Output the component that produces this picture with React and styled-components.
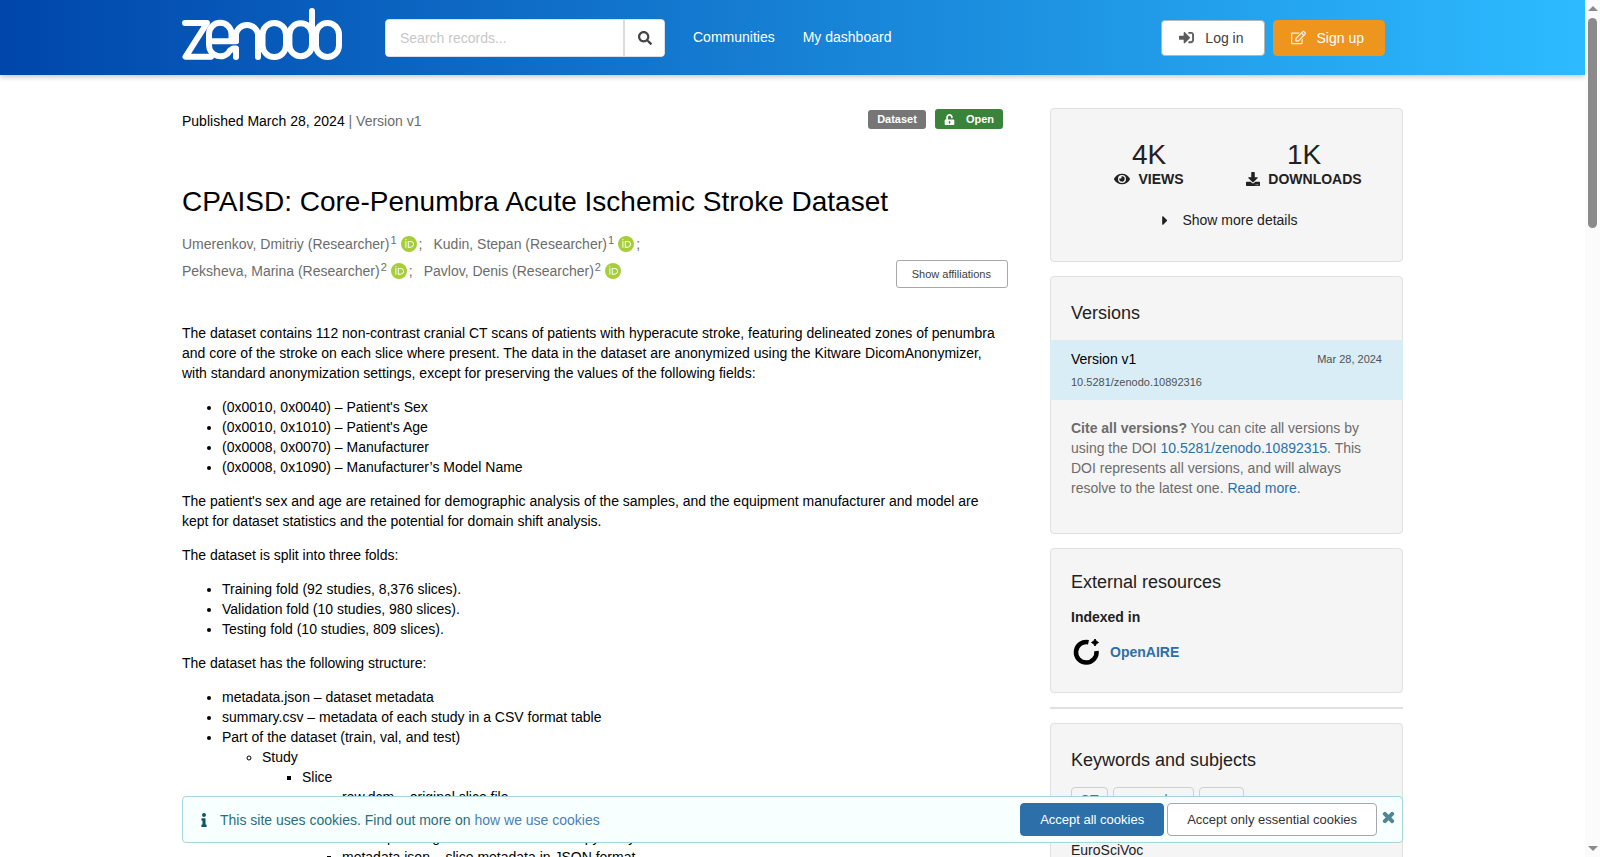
import { useState } from "react";
import styled, { createGlobalStyle } from "styled-components";
import { FaSearch, FaEye, FaDownload, FaCaretRight, FaUnlockAlt, FaInfo, FaTimes, FaSignInAlt, FaRegEdit } from "react-icons/fa";

const colors = {
    text: "#000000",
    heading: "#212121",
    muted: "#6c6c6c",
    link: "#2d6fa8",
    border: "#e0e0e0",
    panel: "#f5f5f5",
    orcid: "#a6ce39",
};

const GlobalStyle = createGlobalStyle`
    * {
        box-sizing: border-box;
    }

    body {
        margin: 0;
        background: #ffffff;
        color: ${colors.text};
        font-family: "Liberation Sans", Arial, sans-serif;
        font-size: 14px;
        line-height: 20px;
    }

    button, input {
        font-family: inherit;
    }

    a {
        color: ${colors.link};
        text-decoration: none;
    }
`;

const Window = styled.div`
    display: flex;
    height: 100vh;
    overflow: hidden;
`;

const Page = styled.div`
    flex: 1;
    min-width: 0;
    height: 100%;
    overflow: hidden;
    position: relative;
`;

const Container = styled.div`
    width: 100%;
    max-width: 1221px;
    margin: 0 auto;
`;

const Header = styled.header`
    height: 75px;
    background: linear-gradient(90deg, #0046ab, #2dbbff);
    box-shadow: 0 2px 5px rgba(0, 0, 0, 0.22);
`;

const HeaderContent = styled(Container)`
    display: flex;
    align-items: center;
    height: 75px;
    padding-right: 18px;
`;

const LogoLink = styled.a`
    display: flex;
    margin: 0 43px 7px 0;
`;

const SearchForm = styled.form`
    display: flex;
    width: 280px;
    height: 38px;
    background: #ffffff;
    border: 1px solid #dcdfe3;
    border-radius: 4px;
    overflow: hidden;
`;

const SearchInput = styled.input`
    flex: 1;
    min-width: 0;
    padding: 0 14px;
    border: none;
    font-size: 14px;
    outline: none;

    &::placeholder {
        color: #c8c8c8;
    }
`;

const SearchButton = styled.button`
    display: flex;
    align-items: center;
    justify-content: center;
    width: 41px;
    padding: 0;
    border: none;
    border-left: 2px solid #dcdcdc;
    background: #ffffff;
    color: #444444;
    font-size: 14px;
    cursor: pointer;
`;

const Nav = styled.nav`
    display: flex;
    flex: 1;
    gap: 28px;
    margin-left: 28px;
    padding-bottom: 2px;

    & a {
        color: #ffffff;
    }
`;

const Actions = styled.div`
    display: flex;
    gap: 8px;
`;

const HeaderButton = styled.button`
    display: flex;
    align-items: center;
    gap: 11px;
    height: 36px;
    padding: 0 20px 0 17px;
    border: 1px solid ${(props) => (props.$primary ? "#ed951c" : "#b5b5b5")};
    border-radius: 4px;
    background: ${(props) => (props.$primary ? "#ed951c" : "#ffffff")};
    color: ${(props) => (props.$primary ? "#ffffff" : "#404040")};
    font-size: 14px;
    cursor: pointer;

    & svg {
        width: 15px;
        height: 15px;
        opacity: 0.85;
    }
`;

const Layout = styled(Container)`
    display: flex;
    gap: 42px;
    padding-top: 33px;
`;

const Main = styled.main`
    flex: 1;
    min-width: 0;
`;

const Sidebar = styled.aside`
    flex: 0 0 353px;
`;

const InfoRow = styled.div`
    display: flex;
    justify-content: space-between;
    padding: 0 5px 0 0;
`;

const Published = styled.div`
    padding-top: 3px;

    & span {
        color: ${colors.muted};
    }
`;

const Labels = styled.div`
    display: flex;
    align-items: center;
    gap: 9px;
    height: 22px;
`;

const Label = styled.span`
    display: flex;
    align-items: center;
    gap: 11px;
    height: ${(props) => (props.$open ? "20px" : "19px")};
    padding: 0 9px;
    border-radius: 3px;
    background: ${(props) => (props.$open ? "#3a833b" : "#767676")};
    color: #ffffff;
    font-size: 11px;
    font-weight: bold;
`;

const Title = styled.h1`
    margin: 53px 0 0;
    font-size: 28px;
    font-weight: normal;
    line-height: 36px;
`;

const CreatorsRow = styled.div`
    display: flex;
    justify-content: space-between;
    align-items: flex-end;
    margin-top: 10px;
`;

const Creators = styled.ul`
    display: flex;
    flex-wrap: wrap;
    flex: 0 1 580px;
    margin: 0 0 5px;
    padding: 0;
    list-style: none;
`;

const Creator = styled.li`
    display: flex;
    align-items: center;
    height: 27px;
    margin-right: 11px;
    color: ${colors.muted};

    & a {
        color: ${colors.muted};
    }

    & sup {
        align-self: flex-start;
        margin: 0 4px 0 1px;
        font-size: 11px;
        line-height: 20px;
    }

    & svg {
        margin-right: 2px;
    }
`;

const AffiliationsButton = styled.button`
    height: 28px;
    margin-bottom: 1px;
    padding: 0 16px 0 15px;
    border: 1px solid #a8a8a8;
    border-radius: 3px;
    background: #ffffff;
    color: #404040;
    font-size: 11px;
    cursor: pointer;
`;

const Description = styled.section`
    margin-top: 34px;

    & p {
        margin: 0 0 14px;
    }

    & ul {
        margin: 0 0 14px;
        padding-left: 40px;
    }

    & ul ul {
        margin: 0;
    }
`;

const Panel = styled.section`
    margin-bottom: 14px;
    padding: ${(props) => props.$padding || "23px 20px"};
    border: 1px solid ${colors.border};
    border-radius: 4px;
    background: ${colors.panel};
    color: ${colors.heading};
`;

const PanelTitle = styled.h2`
    margin: 0;
    font-size: 18px;
    font-weight: normal;
    line-height: 24px;
`;

const Stats = styled.div`
    display: grid;
    grid-template-columns: 155px 155px;
    justify-content: center;
    text-align: center;
`;

const StatValue = styled.div`
    font-size: 28px;
    line-height: 28px;
`;

const StatLabel = styled.div`
    display: flex;
    align-items: center;
    justify-content: center;
    gap: 8px;
    font-weight: bold;
    white-space: nowrap;
`;

const DetailsButton = styled.button`
    display: flex;
    align-items: center;
    gap: 14px;
    margin: 21px auto 0;
    padding: 0 0 0 7px;
    border: none;
    background: none;
    color: ${colors.heading};
    font-size: 14px;
    line-height: 20px;
    cursor: pointer;

    & svg {
        width: 6px;
        height: 15px;
    }
`;

const VersionRow = styled.div`
    display: grid;
    grid-template-columns: 1fr auto;
    row-gap: 3px;
    margin: 15px -21px 18px;
    padding: 9px 21px 8px;
    background: #d9edf6;
    color: ${colors.text};

    & a, & time {
        color: #4f5254;
        font-size: 11px;
    }
`;

const Note = styled.p`
    margin: 0;
    color: ${colors.muted};
`;

const IndexedTitle = styled.h3`
    margin: 13px 0 10px;
    font-size: 14px;
    line-height: 20px;
`;

const IndexedLink = styled.a`
    display: flex;
    align-items: center;
    gap: 9px;
    font-weight: bold;
`;

const Divider = styled.hr`
    height: 2px;
    margin: 0 0 14px;
    border: none;
    background: ${colors.border};
`;

const Tags = styled.div`
    display: flex;
    gap: 5px;
    margin: 15px 0 27px;
`;

const Tag = styled.a`
    padding: 2px 8px;
    border: 1px solid #cfcfcf;
    border-radius: 4px;
    color: #6c6c6c;
`;

const CookieBar = styled.div`
    position: absolute;
    bottom: 14px;
    left: 0;
    right: 0;
`;

const CookieContent = styled(Container)`
    display: flex;
    align-items: center;
    height: 47px;
    padding: 0 6px 0 14px;
    border: 1px solid #a3d6df;
    border-radius: 4px;
    background: #f8ffff;
    color: #276f80;

    & > svg {
        flex: none;
        margin-right: 9px;
        color: #0e566c;
    }
`;

const CookieText = styled.p`
    flex: 1;
    margin: 0;

    & a {
        color: #4a80b8;
    }
`;

const CookieButton = styled.button`
    height: 33px;
    margin-right: 3px;
    padding: 0 19px;
    border: 1px solid ${(props) => (props.$primary ? "#2d6fa8" : "#a8a8a8")};
    border-radius: 4px;
    background: ${(props) => (props.$primary ? "#2d6fa8" : "#ffffff")};
    color: ${(props) => (props.$primary ? "#ffffff" : "#333333")};
    font-size: 13px;
    cursor: pointer;
`;

const CloseButton = styled.button`
    display: flex;
    margin: 0 0 5px 1px;
    padding: 0;
    border: none;
    background: none;
    color: #4f8794;
    cursor: pointer;

    & path {
        stroke: currentColor;
        stroke-width: 40px;
    }
`;

const Scrollbar = styled.div`
    display: flex;
    flex-direction: column;
    align-items: center;
    justify-content: space-between;
    flex: 0 0 15px;
    padding: 6px 0;
    background: #fbfbfb;
`;

const ScrollArea = styled.div`
    flex: 1;
    padding-top: 7px;
`;

const ScrollThumb = styled.div`
    width: 9px;
    height: 210px;
    border-radius: 5px;
    background: #8b8b8b;
`;

const ScrollArrow = styled.div`
    border: 5px solid transparent;
    border-top: ${(props) => (props.$up ? "none" : "5px solid #8b8b8b")};
    border-bottom: ${(props) => (props.$up ? "5px solid #8b8b8b" : "none")};
`;

const creators = [
    { name: "Umerenkov, Dmitriy (Researcher)", affiliation: 1 },
    { name: "Kudin, Stepan (Researcher)", affiliation: 1 },
    { name: "Peksheva, Marina (Researcher)", affiliation: 2 },
    { name: "Pavlov, Denis (Researcher)", affiliation: 2 },
];

const keywords = ["CT", "penumbra", "core"];

function Logo(){
    return(
        <svg width="160" height="52" viewBox="0 0 160 52" fill="none" stroke="#ffffff" strokeWidth="6" strokeLinecap="round" strokeLinejoin="round" aria-label="Zenodo" role="img">
            <path d="M3 15H25L3.500 48.800H29" />
            <path d="M27 33.200H54M49.500 33V26A11.200 11.200 0 0 0 27 26V37A11.200 11.200 0 0 0 48 42.500L51 40.500H54V49" />
            <path d="M54 33V26A11.200 11.200 0 0 1 76 26V49" />
            <rect x="80.500" y="15" width="23.500" height="34" rx="11.700" />
            <path d="M130 3V37A11.300 11.300 0 0 1 107.400 37V26.500A11.300 11.300 0 0 1 130 26.500" />
            <rect x="134" y="15" width="23" height="34" rx="11.500" />
        </svg>
    )
}

function OrcidIcon(){
    return(
        <svg width="16" height="16" viewBox="0 0 256 256" role="img" aria-label="ORCID">
            <circle cx="128" cy="128" r="128" fill={colors.orcid} />
            <path fill="#ffffff" d="M71 79h15v107H71zM109 79h42c40 0 57 28 57 54 0 28-22 54-57 54h-42zm15 14v80h25c35 0 43-27 43-40 0-22-14-40-45-40z" />
            <circle cx="78" cy="57" r="10" fill="#ffffff" />
        </svg>
    )
}

function OpenAireIcon(){
    return(
        <svg width="30" height="30" viewBox="0 0 30 30" aria-hidden="true">
            <path d="M17.500 5.200A10.300 10.300 0 1 0 25.500 14" fill="none" stroke="#000000" strokeWidth="4.500" />
            <path d="M24 2Q24.800 4.700 27.500 5.500Q24.800 6.300 24 9Q23.200 6.300 20.500 5.500Q23.200 4.700 24 2Z" fill="#000000" stroke="#000000" strokeWidth="1" />
        </svg>
    )
}

function App(){
    const [showCookies, setShowCookies] = useState(true);

    return(
        <Window>
            <GlobalStyle />

            <Page>
                <Header>
                    <HeaderContent>
                        <LogoLink href="#home"><Logo /></LogoLink>
                        <SearchForm onSubmit={(e) => e.preventDefault()}>
                            <SearchInput type="text" aria-label="Search records" placeholder="Search records..." />
                            <SearchButton type="submit" aria-label="Search"><FaSearch /></SearchButton>
                        </SearchForm>
                        <Nav>
                            <a href="#communities">Communities</a>
                            <a href="#dashboard">My dashboard</a>
                        </Nav>
                        <Actions>
                            <HeaderButton><FaSignInAlt />Log in</HeaderButton>
                            <HeaderButton $primary><FaRegEdit />Sign up</HeaderButton>
                        </Actions>
                    </HeaderContent>
                </Header>

                <Layout>
                    <Main>
                        <InfoRow>
                            <Published>Published March 28, 2024 <span>| Version v1</span></Published>
                            <Labels>
                                <Label>Dataset</Label>
                                <Label $open><FaUnlockAlt />Open</Label>
                            </Labels>
                        </InfoRow>

                        <Title>CPAISD: Core-Penumbra Acute Ischemic Stroke Dataset</Title>

                        <CreatorsRow>
                            <Creators>
                                {creators.map((creator, index) => (
                                    <Creator key={creator.name}>
                                        <a href="#creator">{creator.name}</a>
                                        <sup>{creator.affiliation}</sup>
                                        <OrcidIcon />
                                        {index < creators.length - 1 ? ";" : null}
                                    </Creator>
                                ))}
                            </Creators>
                            <AffiliationsButton>Show affiliations</AffiliationsButton>
                        </CreatorsRow>

                        <Description>
                            <p>The dataset contains 112 non-contrast cranial CT scans of patients with hyperacute stroke, featuring delineated zones of penumbra and core of the stroke on each slice where present. The data in the dataset are anonymized using the Kitware DicomAnonymizer, with standard anonymization settings, except for preserving the values of the following fields:</p>
                            <ul>
                                <li>(0x0010, 0x0040) – Patient's Sex</li>
                                <li>(0x0010, 0x1010) – Patient's Age</li>
                                <li>(0x0008, 0x0070) – Manufacturer</li>
                                <li>(0x0008, 0x1090) – Manufacturer’s Model Name</li>
                            </ul>
                            <p>The patient's sex and age are retained for demographic analysis of the samples, and the equipment manufacturer and model are kept for dataset statistics and the potential for domain shift analysis.</p>
                            <p>The dataset is split into three folds:</p>
                            <ul>
                                <li>Training fold (92 studies, 8,376 slices).</li>
                                <li>Validation fold (10 studies, 980 slices).</li>
                                <li>Testing fold (10 studies, 809 slices).</li>
                            </ul>
                            <p>The dataset has the following structure:</p>
                            <ul>
                                <li>metadata.json – dataset metadata</li>
                                <li>summary.csv – metadata of each study in a CSV format table</li>
                                <li>Part of the dataset (train, val, and test)
                                    <ul>
                                        <li>Study
                                            <ul>
                                                <li>Slice
                                                    <ul>
                                                        <li>raw.dcm – original slice file</li>
                                                        <li>image.npz – slice in numpy array</li>
                                                        <li>mask.npz – segmentation mask in numpy array</li>
                                                        <li>metadata.json – slice metadata in JSON format</li>
                                                    </ul>
                                                </li>
                                            </ul>
                                        </li>
                                    </ul>
                                </li>
                            </ul>
                        </Description>
                    </Main>

                    <Sidebar>
                        <Panel $padding="32px 20px 31px">
                            <Stats>
                                <div>
                                    <StatValue>4K</StatValue>
                                    <StatLabel><FaEye size={16} />VIEWS</StatLabel>
                                </div>
                                <div>
                                    <StatValue>1K</StatValue>
                                    <StatLabel><FaDownload size={14} />DOWNLOADS</StatLabel>
                                </div>
                            </Stats>
                            <DetailsButton><FaCaretRight />Show more details</DetailsButton>
                        </Panel>

                        <Panel $padding="24px 20px 35px">
                            <PanelTitle>Versions</PanelTitle>
                            <VersionRow>
                                <span>Version v1</span>
                                <time dateTime="2024-03-28">Mar 28, 2024</time>
                                <a href="#doi">10.5281/zenodo.10892316</a>
                            </VersionRow>
                            <Note>
                                <strong>Cite all versions?</strong> You can cite all versions by using the DOI <a href="#doi-all">10.5281/zenodo.10892315</a>. This DOI represents all versions, and will always resolve to the latest one. <a href="#faq">Read more</a>.
                            </Note>
                        </Panel>

                        <Panel $padding="21px 20px 25px">
                            <PanelTitle>External resources</PanelTitle>
                            <IndexedTitle>Indexed in</IndexedTitle>
                            <IndexedLink href="#openaire"><OpenAireIcon />OpenAIRE</IndexedLink>
                        </Panel>

                        <Divider />

                        <Panel $padding="24px 20px">
                            <PanelTitle>Keywords and subjects</PanelTitle>
                            <Tags>
                                {keywords.map((keyword) => (
                                    <Tag key={keyword} href="#keyword">{keyword}</Tag>
                                ))}
                            </Tags>
                            <div>EuroSciVoc</div>
                        </Panel>
                    </Sidebar>
                </Layout>

                {showCookies ?
                    (<CookieBar>
                        <CookieContent>
                            <FaInfo />
                            <CookieText>This site uses cookies. Find out more on <a href="#cookies">how we use cookies</a></CookieText>
                            <CookieButton $primary>Accept all cookies</CookieButton>
                            <CookieButton>Accept only essential cookies</CookieButton>
                            <CloseButton aria-label="Close" onClick={() => setShowCookies(false)}><FaTimes size={15} /></CloseButton>
                        </CookieContent>
                    </CookieBar>)
                    :
                    null
                }
            </Page>

            <Scrollbar>
                <ScrollArrow $up />
                <ScrollArea><ScrollThumb /></ScrollArea>
                <ScrollArrow />
            </Scrollbar>
        </Window>
    )
}

export default App;
